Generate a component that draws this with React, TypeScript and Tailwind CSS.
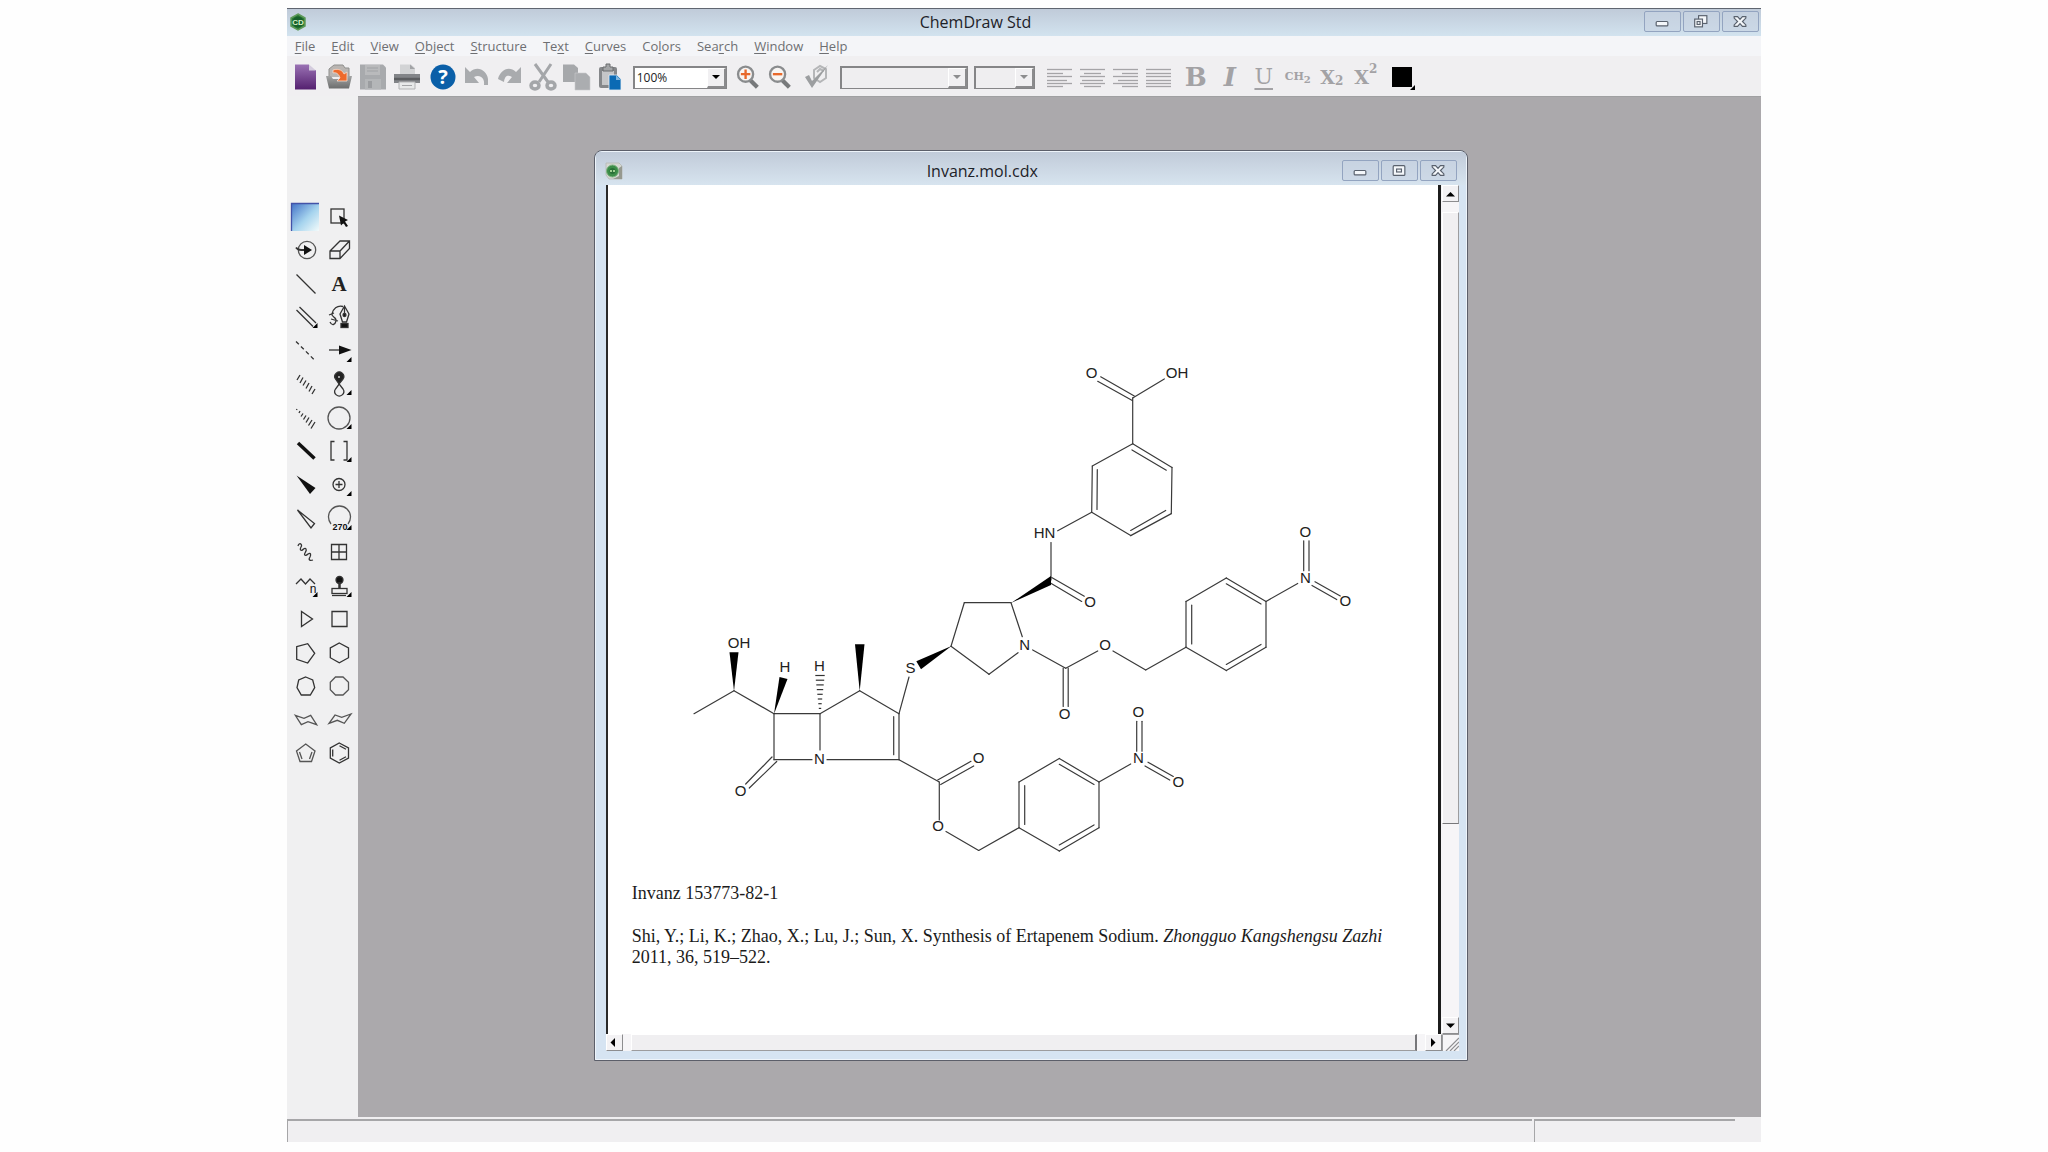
import React from 'react';

type LineSpec = [number, number, number, number];

const MENU_ITEMS = [
  { label: 'File', key: 0 },
  { label: 'Edit', key: 0 },
  { label: 'View', key: 0 },
  { label: 'Object', key: 0 },
  { label: 'Structure', key: 0 },
  { label: 'Text', key: 2 },
  { label: 'Curves', key: 0 },
  { label: 'Colors', key: 2 },
  { label: 'Search', key: 3 },
  { label: 'Window', key: 0 },
  { label: 'Help', key: 0 },
];

// --- Window chrome ---

const AppLogo = () => (
  <svg viewBox="0 0 18 18" className="w-[18px] h-[18px]" aria-hidden="true">
    <path d="M9 1 L16 5 V13 L9 17 L2 13 V5 Z" fill="#2c7a35" stroke="#5f9a5a" strokeWidth="1.5" />
    <circle cx="9" cy="9" r="5.5" fill="#17602a" />
    <text x="9" y="12" textAnchor="middle" fontSize="8" fontWeight="700" fill="#d9f2c8" fontFamily="Liberation Sans, sans-serif">CD</text>
  </svg>
);

const DocLogo = () => (
  <svg viewBox="0 0 18 18" className="w-[18px] h-[18px]" aria-hidden="true">
    <path d="M1 1 H14 L17 4 V17 H4 L1 13 Z" fill="#d5d8d2" stroke="#b4b8b2" strokeWidth="0.8" />
    <path d="M8 17 H17 V4 L14 6 V14 Z" fill="#96998f" />
    <circle cx="7.5" cy="9" r="6" fill="#3c8d48" stroke="#7fb483" />
    <circle cx="7.5" cy="9" r="3" fill="#2a7037" />
    <path d="M5 9 H7 M8 9 H10" stroke="#c5efb0" strokeWidth="1.5" />
  </svg>
);

const glyphProps = { fill: '#f4f7fa', stroke: '#59616d', strokeWidth: 1.2 };

const MinimizeGlyph = () => (
  <svg viewBox="0 0 36 20" className="w-9 h-5" aria-hidden="true">
    <rect x="11.5" y="9.5" width="12" height="4.5" rx="1" {...glyphProps} />
  </svg>
);

const RestoreGlyph = () => (
  <svg viewBox="0 0 36 20" className="w-9 h-5" aria-hidden="true">
    <rect x="15" y="3.5" width="8.5" height="8" {...glyphProps} />
    <rect x="11" y="7" width="8" height="8" {...glyphProps} />
    <rect x="13.5" y="9.5" width="3" height="3" {...glyphProps} />
  </svg>
);

const MaximizeGlyph = () => (
  <svg viewBox="0 0 36 20" className="w-9 h-5" aria-hidden="true">
    <rect x="11.5" y="4.5" width="12" height="10" rx="1" {...glyphProps} />
    <rect x="15" y="8" width="5" height="3" {...glyphProps} />
  </svg>
);

const CloseGlyph = () => (
  <svg viewBox="0 0 36 20" className="w-9 h-5" aria-hidden="true">
    <path
      d="M11.5 4.5 H15 L17.5 7.3 L20 4.5 H23.5 V6 L20 9.5 L23.5 13 V14.5 H20 L17.5 11.7 L15 14.5 H11.5 V13 L15 9.5 L11.5 6 Z"
      {...glyphProps}
    />
  </svg>
);

const WindowButtons: React.FC<{ middle: React.ReactNode; middleLabel: string }> = ({ middle, middleLabel }) => {
  const cls = 'w-[37px] h-[21px] flex items-center justify-center rounded-[2px] border border-[#93a4c0] bg-[#c8d4e3]/60';
  return (
    <div className="flex gap-[2px]">
      <button type="button" aria-label="Minimize" className={cls}><MinimizeGlyph /></button>
      <button type="button" aria-label={middleLabel} className={cls}>{middle}</button>
      <button type="button" aria-label="Close" className={cls}><CloseGlyph /></button>
    </div>
  );
};

// --- Toolbar ---

const ToolbarIcon: React.FC<{ children: React.ReactNode }> = ({ children }) => (
  <svg viewBox="0 0 34 34" className="w-[34px] h-[34px]" aria-hidden="true">{children}</svg>
);

const FILE_BUTTONS: { label: string; icon: React.ReactNode }[] = [
  {
    label: 'New',
    icon: (
      <>
        <path d="M7 4.5 H21 V10 H28 V29.500 H7 Z" fill="url(#newDoc)" />
        <path d="M21 4.5 L28 10.500 H21 Z" fill="#d3cbdd" />
      </>
    ),
  },
  {
    label: 'Open',
    icon: (
      <>
        <path d="M7 17 V9 L12 5 H21 L23 8 H27 V17" fill="#b9b5b2" stroke="#8f8f8d" />
        <path d="M4 16 H9 L11 19 H23 L25 16 H30 L27 28.500 H7 Z" fill="url(#tray)" />
        <path d="M11 10 C17 8 21 11 22 14 L25 12 V21 H15 L18 18 C17 14 14 12 11 13 Z" fill="#ee6a2c" stroke="#f6ddcf" strokeWidth="0.8" />
      </>
    ),
  },
  {
    label: 'Save',
    icon: (
      <>
        <path d="M4 4.500 H27 L30 7.500 V29.500 H4 Z" fill="#a8aaad" />
        <path d="M9 5 H24 V15 H9 Z" fill="#b9babc" />
        <path d="M11 8 H22 M11 11 H22" stroke="#a0a2a5" />
        <path d="M9 19 H25 V29.500 H9 Z" fill="#b4b6b8" />
        <rect x="12" y="21" width="4" height="7" fill="#9b9da0" />
      </>
    ),
  },
  {
    label: 'Print',
    icon: (
      <>
        <path d="M10 4.500 H21 L25 8 V14 H10 Z" fill="#d2d3d5" />
        <path d="M20 4.500 V9 H25 Z" fill="#a2a3a6" />
        <path d="M4 14 H30 V23 H4 Z" fill="#828488" />
        <path d="M4 19 H30" stroke="#5b5d60" strokeWidth="2.5" />
        <path d="M9 22 H25 V29 H9 Z" fill="#e8e9ea" stroke="#b2b3b5" />
        <path d="M12 25.500 H22" stroke="#a4a5a8" />
      </>
    ),
  },
  {
    label: 'Help',
    icon: (
      <>
        <circle cx="19" cy="17" r="12.500" fill="#0a5fa8" />
        <text x="19" y="24" textAnchor="middle" fontSize="20" fontWeight="700" fill="#fff" fontFamily="Open Sans, sans-serif">?</text>
      </>
    ),
  },
  {
    label: 'Undo',
    icon: <path d="M7 7 L12 12 C19 5 29 10 30 19 V25 H26 C27 18 22 14 16 17 L21 23 H7 Z" fill="#a9abae" />,
  },
  {
    label: 'Redo',
    icon: <path d="M29 7 L24 12 C17 5 8 10 6 19 L12 22 C13 15 16 15 20 17 L15 23 H29 Z" fill="#a9abae" />,
  },
  {
    label: 'Cut',
    icon: (
      <g stroke="#a4a6a9" fill="none">
        <path d="M9 4 L22 22 M25 4 L13 22" strokeWidth="3" />
        <ellipse cx="9" cy="25.500" rx="4" ry="3.500" strokeWidth="3.500" />
        <ellipse cx="25" cy="25.500" rx="4" ry="3.500" strokeWidth="3.500" />
      </g>
    ),
  },
  {
    label: 'Copy',
    icon: (
      <>
        <path d="M3 4.500 H14 L18 8 V22 H3 Z" fill="#a6a8ab" />
        <path d="M15 13 H26 L30 17 V30 H15 Z" fill="#abadb0" stroke="#c9cacc" strokeWidth="0.6" />
      </>
    ),
  },
  {
    label: 'Paste',
    icon: (
      <>
        <rect x="5" y="7" width="18" height="21" rx="2" fill="#85878a" />
        <rect x="8" y="11" width="12" height="14" fill="#c5c6c8" />
        <path d="M9 7 H12 V4 H16 V7 H19 V11 H9 Z" fill="#a3a5a7" stroke="#6a6c6e" />
        <path d="M15 15 H23 L27 19 V30 H15 Z" fill="#0b6ab4" stroke="#e8eef4" strokeWidth="0.8" />
        <path d="M22 15 V20 H27 Z" fill="#7fb5de" />
      </>
    ),
  },
];

const ZoomGlyph: React.FC<{ plus?: boolean }> = ({ plus }) => (
  <ToolbarIcon>
    <path d="M20 20 L28 28" stroke="#77797b" strokeWidth="4.5" />
    <circle cx="15.500" cy="14" r="8" fill="#f8f5f3" stroke="#8a8c8e" strokeWidth="2.500" />
    <path d={plus ? 'M10.500 14 H20.500 M15.500 9 V19' : 'M10.500 14 H20.500'} stroke="#e8692c" strokeWidth="2.500" />
  </ToolbarIcon>
);

const CheckGlyph = () => (
  <ToolbarIcon>
    <path d="M14 10 L20 6 L26 9 V18 L20 22 L14 18 Z M17 12 L20 9 L24 11" fill="none" stroke="#b5b6b8" strokeWidth="2" />
    <path d="M5 17 L9 15 L12 21 L28 5 L12 28 Z" fill="#9c9ea0" />
  </ToolbarIcon>
);

const ALIGNMENTS: { label: string; lines: LineSpec[] }[] = [
  { label: 'Align left', lines: [[4, 9, 29, 9], [4, 13, 20, 13], [4, 16, 29, 16], [4, 20, 24, 20], [4, 23, 29, 23], [4, 26, 20, 26]] },
  { label: 'Align center', lines: [[4, 9, 29, 9], [8, 13, 25, 13], [4, 16, 29, 16], [6, 20, 27, 20], [4, 23, 29, 23], [8, 26, 25, 26]] },
  { label: 'Align right', lines: [[4, 9, 29, 9], [13, 13, 29, 13], [4, 16, 29, 16], [9, 20, 29, 20], [4, 23, 29, 23], [13, 26, 29, 26]] },
  { label: 'Justify', lines: [[4, 9, 29, 9], [4, 13, 29, 13], [4, 16, 29, 16], [4, 20, 29, 20], [4, 23, 29, 23], [4, 26, 29, 26]] },
];

const Combo: React.FC<{ label: string; value?: string; className: string; disabled?: boolean }> = ({ label, value, className, disabled }) => (
  <div className={`flex h-[23px] border-t-2 border-l-2 border-r border-b border-[#858587] ${disabled ? 'bg-[#efeef0]' : 'bg-white'} ${className}`}>
    <select aria-label={label} disabled={disabled} className="flex-1 min-w-0 appearance-none bg-transparent pl-[2px] text-[12px] leading-[16px] text-[#222]">
      <option>{value ?? ''}</option>
    </select>
    <span className="w-[19px] flex items-center justify-center bg-[#f1f0f2] border-t border-l border-t-white border-l-white border-r-2 border-b-2 border-r-[#8b8b8d] border-b-[#8b8b8d]">
      <svg viewBox="0 0 8 4" className="w-2 h-1" aria-hidden="true">
        <path d="M0 0 H8 L4 4 Z" fill={disabled ? '#8d8d8f' : '#000'} />
      </svg>
    </span>
  </div>
);

const Toolbar = () => {
  const textBtn = 'w-[34px] h-[34px] flex items-center justify-center text-[#a3a2a5]';
  return (
    <div className="flex-none flex items-center h-10 pl-px pt-[2px] bg-[#f0eff1] font-['DejaVu_Serif',serif]">
      <svg className="w-0 h-0" aria-hidden="true">
        <defs>
          <linearGradient id="newDoc" x1="0" y1="0" x2="0" y2="1">
            <stop offset="0" stopColor="#9a72b4" />
            <stop offset="1" stopColor="#54206f" />
          </linearGradient>
          <linearGradient id="tray" x1="0" y1="0" x2="0" y2="1">
            <stop offset="0" stopColor="#a4a5a5" />
            <stop offset="1" stopColor="#6c6d6d" />
          </linearGradient>
        </defs>
      </svg>
      {FILE_BUTTONS.map(b => (
        <button key={b.label} type="button" aria-label={b.label} className="flex-none">
          <ToolbarIcon>{b.icon}</ToolbarIcon>
        </button>
      ))}
      <div className="font-['Open_Sans',sans-serif]">
        <Combo label="Zoom level" value="100%" className="ml-[5px] mr-1 w-[94px]" />
      </div>
      <button type="button" aria-label="Zoom in" className="w-8 flex justify-center"><ZoomGlyph plus /></button>
      <button type="button" aria-label="Zoom out" className="w-8 flex justify-center"><ZoomGlyph /></button>
      <button type="button" aria-label="Check structure" className="w-[45px] flex justify-center"><CheckGlyph /></button>
      <Combo label="Font" className="w-[128px]" disabled />
      <Combo label="Font size" className="ml-[6px] mr-2 w-[61px]" disabled />
      {ALIGNMENTS.map(a => (
        <button key={a.label} type="button" aria-label={a.label} className="w-[33px] h-[34px]">
          <svg viewBox="0 0 33 34" className="w-[33px] h-[34px]" aria-hidden="true">
            {a.lines.map(([x1, y1, x2, y2]) => (
              <line key={y1} x1={x1} y1={y1 + 0.5} x2={x2} y2={y2 + 0.5} stroke="#a5a4a7" strokeWidth="1.3" />
            ))}
          </svg>
        </button>
      ))}
      <button type="button" aria-label="Bold" className={`${textBtn} ml-1 text-[26px] leading-[34px] font-bold`}>B</button>
      <button type="button" aria-label="Italic" className={`${textBtn} text-[26px] leading-[34px] font-bold italic`}>I</button>
      <button type="button" aria-label="Underline" className={`${textBtn} text-[22px] leading-[34px] underline underline-offset-4`}>U</button>
      <button type="button" aria-label="Formula" className={`${textBtn} text-[11px] font-bold`}>CH<span className="pt-1 text-[10px]">2</span></button>
      <button type="button" aria-label="Subscript" className={`${textBtn} text-[19px] font-bold`}>X<span className="pt-2 text-[12px]">2</span></button>
      <button type="button" aria-label="Superscript" className={`${textBtn} text-[19px] font-bold`}>X<span className="pb-4 text-[12px]">2</span></button>
      <button type="button" aria-label="Color" className="w-[34px] h-[34px]">
        <ToolbarIcon>
          <rect x="9" y="7" width="20" height="20" fill="#000" />
          <path d="M32 25 V30 H27 Z" fill="#000" />
        </ToolbarIcon>
      </button>
    </div>
  );
};

// --- Tool palette ---

const Corner = () => <path d="M29.500 23 V28 H24.500 Z" fill="#000" stroke="none" />;

const TOOLS: { label: string; icon: React.ReactNode }[] = [
  {
    label: 'Structure perspective',
    icon: (
      <>
        <rect x="3" y="3" width="28" height="28" fill="url(#lasso)" stroke="none" />
        <path d="M3.500 31 V3.500 H31" stroke="#4353a8" />
      </>
    ),
  },
  {
    label: 'Marquee',
    icon: (
      <>
        <rect x="9" y="9" width="13" height="14" />
        <path d="M17 15.500 L26 20 L23 21.500 L26 26 L24 27 L21.500 23 L19 25.500 Z" fill="#111" stroke="none" />
      </>
    ),
  },
  {
    label: 'Mass fragmentation',
    icon: (
      <>
        <circle cx="19" cy="17" r="8.700" stroke="#555" />
        <path d="M8 14.500 C10 17 12 17 17 17" strokeWidth="2" />
        <path d="M16 12 L24 17 L16 22 Z" fill="#111" stroke="none" />
      </>
    ),
  },
  { label: 'Eraser', icon: <path d="M8 18 L18 8 H27.500 V15.500 L18 25.500 H8 Z M8 18 H18 L27.500 8 M18 18 V25.500" /> },
  { label: 'Solid bond', icon: <path d="M8.500 7.500 L27.500 26.500" /> },
  {
    label: 'Text tool',
    icon: <text x="17" y="24" textAnchor="middle" fontSize="21" fontWeight="700" fill="#222" stroke="none" fontFamily="Liberation Serif, serif">A</text>,
  },
  { label: 'Multiple bonds', icon: <><path d="M11.500 7 L28 23 M8.500 10 L25 26.500" /><Corner /></> },
  {
    label: 'Pen',
    icon: (
      <>
        <path d="M22.500 6 L27 14 L24.500 22 H20.500 L18 14 Z M22.500 6 V15" />
        <circle cx="22.500" cy="15" r="1.500" fill="#111" />
        <rect x="19" y="23.500" width="7" height="4" fill="#111" />
        <path d="M21 6.500 C15 5 11 9 10 14 C9 17 15 17 14 21 C13 25 10 26 8 22 M7 15 L12 13 M9 19 L16 21" />
      </>
    ),
  },
  { label: 'Dashed bond', icon: <path d="M8 7.500 L27 26.500" strokeDasharray="4 3" /> },
  { label: 'Arrow', icon: <><path d="M7 16 H20" /><path d="M17 11.500 L29.500 16 L17 20.500 Z" fill="#111" stroke="none" /><Corner /></> },
  {
    label: 'Hashed bond',
    icon: <path d="M12 8 L9 13 M15 10.500 L12 16 M18 13.500 L15 18.500 M21 16 L18 21.500 M24 19 L21 24.500 M27 22 L24 27" />,
  },
  {
    label: 'Orbital',
    icon: (
      <>
        <path d="M17 17 L13.500 12 A4.500 4.500 0 1 1 21 12 Z" fill="#222" />
        <path d="M17.200 17 L13.500 22 A4.500 4.500 0 1 0 21 22 Z" />
        <circle cx="17" cy="10" r="1" fill="#ccc" stroke="none" />
        <Corner />
      </>
    ),
  },
  {
    label: 'Hashed wedge',
    icon: <path d="M9 8 L8.500 9 M12 10 L11 12 M15 12.500 L13 15.500 M18 14.500 L15.500 18.500 M21 16.500 L18 21.500 M24 19 L20.500 24.500 M27 21 L23 27.500" />,
  },
  { label: 'Drawing elements', icon: <><circle cx="17" cy="17" r="11" stroke="#555" /><Corner /></> },
  { label: 'Bold bond', icon: <path d="M10 9 L26.500 24.500" strokeWidth="3.500" stroke="#111" /> },
  { label: 'Brackets', icon: <><path d="M12.500 7.500 H9 V26 H12.500 M21.500 7.500 H25 V26 H21.500" /><Corner /></> },
  { label: 'Wedge bond', icon: <path d="M8.500 7.500 L27.500 20 L22 26 Z" fill="#111" stroke="none" /> },
  { label: 'Charge', icon: <><circle cx="17" cy="16.500" r="6" /><path d="M17 13 V20 M13.500 16.500 H20.500" /><Corner /></> },
  { label: 'Hollow wedge', icon: <path d="M9.500 8 L26.500 21.500 L23 26 Z" /> },
  {
    label: 'Arc',
    icon: (
      <>
        <path d="M9 22 A11 11 0 1 1 26 22" stroke="#555" />
        <text x="18" y="28" textAnchor="middle" fontSize="9" fontWeight="700" fill="#111" stroke="none" fontFamily="Liberation Sans, sans-serif">270</text>
        <Corner />
      </>
    ),
  },
  {
    label: 'Wavy bond',
    icon: <path d="M10 11 C11 7 15 9 13 12 C11 16 14 16 15.500 14 C18 12 19 15 17.500 17 C15 21 18 21 20 19 C23 17 23 20 22 22 C20 25 22 26 25 25" />,
  },
  { label: 'Table', icon: <path d="M9.500 9.500 H24.500 V24.500 H9.500 Z M17 9.500 V24.500 M9.500 17 H24.500" /> },
  {
    label: 'Acyclic chain',
    icon: (
      <>
        <path d="M8 15 L13 10 L17.500 15 L22 10 L27 15" />
        <text x="25" y="24" textAnchor="middle" fontSize="12" fill="#111" stroke="none" fontFamily="Liberation Sans, sans-serif">n</text>
        <Corner />
      </>
    ),
  },
  {
    label: 'Templates',
    icon: (
      <>
        <circle cx="17.500" cy="11" r="3.500" fill="#111" />
        <path d="M17.500 13 V19" strokeWidth="2.500" />
        <rect x="10" y="19.500" width="15" height="5" />
        <path d="M10 26.500 H24" />
        <Corner />
      </>
    ),
  },
  { label: 'Cyclopropane', icon: <path d="M13.500 9.500 V24.500 L24.500 17 Z" /> },
  { label: 'Cyclobutane', icon: <path d="M10 9.500 H25 V24.500 H10 Z" /> },
  { label: 'Cyclopentane', icon: <path d="M8.700 10.700 L19.700 7.700 L26.700 17.300 L19.700 27 L8.700 23.300 Z" /> },
  { label: 'Cyclohexane', icon: <path d="M17.300 7 L26.500 12 V21.700 L17.300 26.700 L8.300 21.700 V12 Z" /> },
  { label: 'Cycloheptane', icon: <path d="M17.700 8 L24.700 11 L26.700 18.700 L22.300 26 H13.300 L9 18.700 L10.700 11 Z" /> },
  { label: 'Cyclooctane', icon: <path d="M13.500 8 H21 L26.500 13.300 V20.700 L21 26 H13.500 L8.300 20.700 V13.300 Z" stroke="#555" /> },
  { label: 'Chair left', icon: <path d="M7.300 12.300 L16 15.300 L22.700 12.300 L28.700 21.700 L20 18.700 L13.300 21.700 Z" stroke="#555" /> },
  { label: 'Chair right', icon: <path d="M7 20.300 L13 12 L19.700 14.300 L29 11 L22.300 20.300 L15.300 17.300 Z" stroke="#555" /> },
  { label: 'Cyclopentadiene', icon: <path d="M17.700 8 L27 15 L23.500 25.500 H12 L8.500 15 Z M24 16 L21.500 23 M11.500 16 L14 23" stroke="#555" /> },
  { label: 'Benzene', icon: <path d="M17.300 7 L26.500 12 V22 L17.300 27 L8.300 22 V12 Z M10.700 13.500 V20.500 M17.500 9.700 L24 13.300 M17.500 24.200 L24 20.700" /> },
];

const ToolPalette = () => (
  <aside className="flex-none w-[71px] pl-px pr-[2px] pt-[104px] bg-[#f0f0f1]">
    <div className="grid grid-cols-2 auto-rows-fr h-[570px]">
      {TOOLS.map(tool => (
        <button key={tool.label} type="button" aria-label={tool.label} className="flex items-center justify-center min-h-0">
          <svg viewBox="0 0 34 34" className="w-[34px] h-[34px] flex-none" fill="none" stroke="#333" strokeWidth="1.300" aria-hidden="true">
            <defs>
              <linearGradient id="lasso" x1="0" y1="0" x2="1" y2="1">
                <stop offset="0" stopColor="#3f6fc6" />
                <stop offset="0.55" stopColor="#a6d4ee" />
                <stop offset="1" stopColor="#f3fbfb" />
              </linearGradient>
            </defs>
            {tool.icon}
          </svg>
        </button>
      ))}
    </div>
  </aside>
);

// --- Molecule ---

const CORE_BONDS: LineSpec[] = [
  // hydroxyethyl side chain
  [694, 713.7, 734, 690.7], [734, 690.7, 774, 713.7],
  // beta-lactam
  [774, 713.7, 820, 713.7], [774, 713.7, 774, 759.7], [774, 759.7, 812, 759.7], [820, 713.7, 820, 750],
  [772, 757, 745.7, 784], [776.7, 761.5, 749.3, 788],
  // five-membered ring
  [820, 713.7, 859.7, 690.7], [859.7, 690.7, 899, 713.7], [899, 713.7, 899, 759.7], [893.7, 716.7, 893.7, 754.7], [827, 759.7, 899, 759.7],
  [899, 713.7, 909, 677],
  // ester
  [899, 759.7, 939.3, 782], [937.7, 780, 971, 761.3], [940.7, 784.500, 973.7, 766], [939.3, 782, 939.3, 820],
  // pyrrolidine
  [951, 646.3, 964.3, 602.7], [964.3, 602.7, 1011, 602.7], [1011, 602.7, 1022.3, 636.7], [951, 646.3, 989, 674.3], [989, 674.3, 1018, 652.7],
  // amide
  [1051, 580, 1051, 542.5], [1051.7, 577.6, 1084.3, 596.2], [1050, 582.8, 1081.7, 601.4], [1057.7, 530.8, 1091.7, 512.2],
  // benzoic acid
  [1132.7, 443.7, 1172, 467.4], [1172, 467.4, 1171.3, 513.6], [1171.3, 513.6, 1130.7, 535.6], [1130.7, 535.6, 1091.7, 512.2],
  [1091.7, 512.2, 1092.3, 466], [1092.3, 466, 1132.7, 443.7],
  [1132, 449.9, 1166.3, 470.2], [1165.7, 510.5, 1130.7, 530.4], [1097.3, 469.5, 1097, 509.4],
  [1132.7, 443.7, 1132.7, 397.9], [1132.7, 397.9, 1164.3, 378.9], [1100.7, 376.8, 1134.3, 396.1], [1097.7, 381.3, 1132.3, 400.6],
  // carbamate
  [1032.7, 649.9, 1065.7, 668.2], [1065.7, 668.2, 1097.7, 651], [1063.2, 668, 1063.2, 706.4], [1068.2, 668, 1068.2, 706.4],
];

const NITROBENZYL_BONDS: LineSpec[] = [
  [1113, 651, 1145.7, 669.9], [1145.7, 669.9, 1186, 647.2],
  [1186, 647.2, 1186, 601.4], [1186, 601.4, 1226.3, 578], [1226.3, 578, 1266, 601.4], [1266, 601.4, 1266, 647.2], [1266, 647.2, 1226.3, 670.6], [1226.3, 670.6, 1186, 647.2],
  [1191.7, 605.2, 1191.7, 644], [1226.3, 583.8, 1261, 604], [1226.3, 664.4, 1261, 644.4],
  [1266, 601.4, 1297.7, 583.5],
  [1303.7, 540.8, 1303.7, 570.7], [1309, 540.8, 1309, 570.7],
  [1315, 581.7, 1340.3, 595.9], [1312, 585.5, 1336.7, 599.6],
];

const CORE_ATOMS: { t: string; x: number; y: number }[] = [
  { t: 'OH', x: 739, y: 643 },
  { t: 'H', x: 785, y: 667 },
  { t: 'H', x: 819.4, y: 666 },
  { t: 'N', x: 819.5, y: 758.5 },
  { t: 'O', x: 740.7, y: 791 },
  { t: 'S', x: 910.5, y: 668 },
  { t: 'O', x: 978.5, y: 758 },
  { t: 'N', x: 1024.7, y: 644.5 },
  { t: 'HN', x: 1044.5, y: 533 },
  { t: 'O', x: 1090, y: 602 },
  { t: 'O', x: 1091.7, y: 373 },
  { t: 'OH', x: 1177, y: 373 },
  { t: 'O', x: 1064.7, y: 714 },
];

const NITROBENZYL_ATOMS = [
  { t: 'O', x: 1105, y: 645.3 },
  { t: 'N', x: 1305.3, y: 577.5 },
  { t: 'O', x: 1305.3, y: 531.5 },
  { t: 'O', x: 1345.3, y: 601 },
];

const Fragment: React.FC<{ bonds: LineSpec[]; atoms: { t: string; x: number; y: number }[] }> = ({ bonds, atoms }) => (
  <>
    {bonds.map(([x1, y1, x2, y2], i) => (
      <line key={i} x1={x1} y1={y1} x2={x2} y2={y2} stroke="#3a3a3a" strokeWidth="1.200" strokeLinecap="round" />
    ))}
    {atoms.map((a, i) => (
      <text key={i} x={a.x} y={a.y + 5} textAnchor="middle" fontSize="15" fill="#222">{a.t}</text>
    ))}
  </>
);

const Molecule = () => (
  <svg viewBox="608 185 830 698" className="block w-full" fontFamily="Liberation Sans, Arial, sans-serif" role="img" aria-label="Invanz structure">
    <Fragment bonds={CORE_BONDS} atoms={CORE_ATOMS} />
    <Fragment bonds={NITROBENZYL_BONDS} atoms={NITROBENZYL_ATOMS} />
    <g transform="translate(-167 180.500)">
      <Fragment bonds={NITROBENZYL_BONDS} atoms={NITROBENZYL_ATOMS} />
    </g>
    {/* stereo wedges */}
    <g fill="#000">
      <path d="M734 691 L729.500 652.300 H738.500 Z" />
      <path d="M774 714 L779.500 677 L787.500 679 Z" />
      <path d="M859.700 691 L855 644.300 H864.500 Z" />
      <path d="M951.500 646 L916.300 661.300 L921 669.300 Z" />
      <path d="M1011 603 L1051 576 V585 Z" />
    </g>
    {[0, 1, 2, 3, 4, 5, 6, 7].map(i => (
      <line key={i} x1={815.3 + i * 0.5} x2={824.7 - i * 0.5} y1={675.5 + i * 4.7} y2={675.5 + i * 4.7} stroke="#333" strokeWidth="1.200" />
    ))}
  </svg>
);

// --- Document window ---

const ScrollArrow: React.FC<{ label: string; d: string }> = ({ label, d }) => (
  <button type="button" aria-label={label} className="flex-none w-[17px] h-[17px] bg-[#f3f2f4] border border-t-white border-l-white border-r-[#8d8d8f] border-b-[#8d8d8f]">
    <svg viewBox="0 0 15 15" className="w-[15px] h-[15px]" aria-hidden="true"><path d={d} fill="#000" /></svg>
  </button>
);

const DocumentWindow = () => (
  <section className="absolute left-[236px] top-[53px] w-[874px] rounded-t-lg border border-[#5c5f6a] bg-[#d6e4f2] overflow-hidden">
    <div className="border border-[#eef4fa] rounded-t-lg">
      <header className="flex items-center h-[33px] pl-[9px] pr-[9px] pt-1 bg-gradient-to-b from-[#c1cbd9] to-[#d7e4ef]">
        <DocLogo />
        <h2 className="flex-1 text-center text-[16px] leading-[20px] text-[#1d2228]">Invanz.mol.cdx</h2>
        <WindowButtons middle={<MaximizeGlyph />} middleLabel="Maximize" />
      </header>
      <div className="ml-[10px] mr-[7px] mb-2 grid grid-cols-[1fr_17px] grid-rows-[849px_17px] bg-[#f6f5f7]">
        <article className="mr-px bg-white border-l-2 border-l-[#2a2a2a] border-r-[3px] border-r-[#1c1c1c] font-['Liberation_Serif',serif] text-[18px] leading-[21px] text-[#1b1b1b]">
          <Molecule />
          <p className="pl-6 pb-[22px]">Invanz 153773-82-1</p>
          <p className="pl-6 whitespace-nowrap">
            Shi, Y.; Li, K.; Zhao, X.; Lu, J.; Sun, X. Synthesis of Ertapenem Sodium. <em>Zhongguo Kangshengsu Zazhi</em>
            <br />
            2011, 36, 519–522.
          </p>
        </article>
        <div className="flex flex-col">
          <ScrollArrow label="Scroll up" d="M3 10.500 H12 L7.500 6 Z" />
          <div className="flex-[76] mt-[10px] bg-[#f0eff1] border border-t-white border-l-white border-r-[#9c9c9e] border-b-[#77777a]" />
          <div className="flex-[24]" />
          <ScrollArrow label="Scroll down" d="M3 5.500 H12 L7.500 10 Z" />
        </div>
        <div className="flex">
          <ScrollArrow label="Scroll left" d="M8 3 V12 L3.500 7.500 Z" />
          <div className="flex-1 mx-2 bg-[#f0eff1] border border-t-white border-l-white border-r-2 border-r-[#77777a] border-b-[#9c9c9e]" />
          <ScrollArrow label="Scroll right" d="M5 3 V12 L9.500 7.500 Z" />
        </div>
        <svg viewBox="0 0 17 17" className="w-[17px] h-[17px]" aria-hidden="true">
          <path d="M0.500 17 V0.500 H17" fill="none" stroke="#9c9c9e" />
          <path d="M4 17 L17 4 M8 17 L17 8 M12 17 L17 12" stroke="#8f8f92" strokeWidth="1.200" />
        </svg>
      </div>
    </div>
  </section>
);

const App: React.FC = () => {
  return (
    <div className="h-screen bg-[#fefefe] pt-2 pb-[10px] font-['Open_Sans','Noto_Sans',sans-serif]">
      <div className="w-[72%] h-full mx-auto flex flex-col border-t border-[#5f6570]">
        <header className="flex-none flex items-start h-[27px] pl-[2px] pr-[2px] pt-[2px] bg-gradient-to-b from-[#c0cbd9] to-[#d2e3ef]">
          <div className="pt-[2px]"><AppLogo /></div>
          <h1 className="flex-1 pt-px text-center text-[16px] leading-[20px] text-[#1d2228]">ChemDraw Std</h1>
          <WindowButtons middle={<RestoreGlyph />} middleLabel="Restore" />
        </header>

        <nav className="flex-none flex items-center gap-4 h-5 pl-2 bg-[#f4f5f8] text-[13px] leading-[20px] text-[#6e6f72]">
          {MENU_ITEMS.map(({ label, key }) => (
            <button key={label} type="button">
              {label.slice(0, key)}<u className="underline-offset-2">{label[key]}</u>{label.slice(key + 1)}
            </button>
          ))}
        </nav>

        <Toolbar />

        <div className="flex-1 min-h-0 flex">
          <ToolPalette />
          <main className="flex-1 relative overflow-hidden bg-[#aba9ac] border-t border-[#a0a0a2]">
            <DocumentWindow />
          </main>
        </div>

        <footer className="flex-none flex gap-[2px] h-[25px] pt-[2px] bg-[#f0eff1]">
          <div className="flex-1 border-t-2 border-l border-[#a6a6a8]" />
          <div className="w-[201px] border-t-2 border-l border-[#a6a6a8]" />
          <div className="w-6" />
        </footer>
      </div>
    </div>
  );
};

export default App;
